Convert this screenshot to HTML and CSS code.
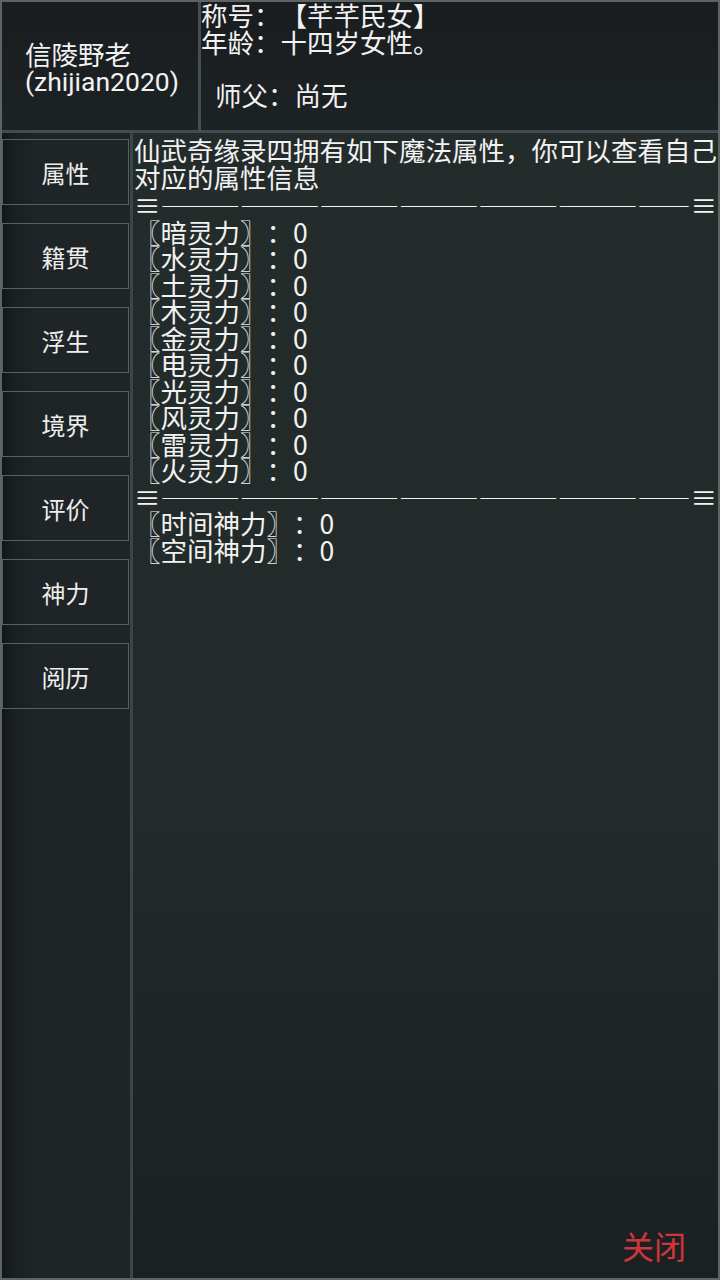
FILE: index.html
```html
<!DOCTYPE html>
<html lang="zh-CN">
<head>
    <meta charset="UTF-8">
    <meta name="viewport" content="width=device-width, initial-scale=1.0">
    <title>属性</title>
    <link rel="stylesheet" href="styles.css">
</head>
<body>
    <div class="frame">
        <div class="top">
            <div class="name">
                <p>信陵野老<br>(zhijian2020)</p>
            </div>
            <div class="profile">
                <p>称号：【芊芊民女】</p>
                <p>年龄：十四岁女性。</p>
                <p>&nbsp;</p>
                <p class="master">师父：尚无</p>
            </div>
        </div>

        <div class="main">
            <!-- tabs -->
            <div class="side">
                <button class="tab">属性</button>
                <button class="tab">籍贯</button>
                <button class="tab">浮生</button>
                <button class="tab">境界</button>
                <button class="tab">评价</button>
                <button class="tab">神力</button>
                <button class="tab">阅历</button>
            </div>

            <!-- attribute info -->
            <div class="content">
                <p>仙武奇缘录四拥有如下魔法属性，你可以查看自己对应的属性信息</p>
                <p class="sep">≡————————————————————≡</p>
                <p class="attr">〖暗灵力〗：0</p>
                <p class="attr">〖水灵力〗：0</p>
                <p class="attr">〖土灵力〗：0</p>
                <p class="attr">〖木灵力〗：0</p>
                <p class="attr">〖金灵力〗：0</p>
                <p class="attr">〖电灵力〗：0</p>
                <p class="attr">〖光灵力〗：0</p>
                <p class="attr">〖风灵力〗：0</p>
                <p class="attr">〖雷灵力〗：0</p>
                <p class="attr">〖火灵力〗：0</p>
                <p class="sep">≡————————————————————≡</p>
                <p class="attr">〖时间神力〗：0</p>
                <p class="attr">〖空间神力〗：0</p>

                <button class="close">关闭</button>
            </div>
        </div>
    </div>
</body>
</html>
```

FILE: styles.css
```css
* {
    margin: 0;
    padding: 0;
    box-sizing: border-box;
}
body {
    width: 720px;
    height: 1280px;
    background-color: #1f2527;
    color: #f2f2f2;
    font-family: Roboto, "Noto Sans CJK SC", sans-serif;
    font-size: 26.5px;
    line-height: 26.5px;
    text-spacing-trim: space-all;
    font-feature-settings: "chws" 0, "halt" 0;
    overflow: hidden;
}
.frame {
    width: 720px;
    height: 1280px;
    border: 2px solid #5d6466;
    display: flex;
    flex-direction: column;
}
.top {
    display: flex;
    height: 131px;
    border-bottom: 3px solid #454c4f;
    background: linear-gradient(#191d20, #1d2224);
}
.name {
    width: 199px;
    border-right: 3px solid #474e51;
    display: flex;
    align-items: center;
    padding: 6px 0 0 23px;
}
.profile {
    flex: 1;
    padding-top: 2px;
}
.master {
    padding-left: 14px;
}
.main {
    flex: 1;
    display: flex;
}
.side {
    width: 131px;
    border-right: 3px solid #3d4547;
    background: linear-gradient(to right, #13171a 0, #1a1f22 12px, #1f2527 34px, #1f2527 100%);
    padding-top: 6px;
    display: flex;
    flex-direction: column;
    gap: 18px;
}
.tab {
    width: 127px;
    height: 66px;
    border: 1px solid #596062;
    background: transparent;
    color: #eeeeee;
    font-family: "Noto Sans CJK SC", sans-serif;
    font-size: 24px;
    cursor: pointer;
}
.content {
    flex: 1;
    display: flex;
    flex-direction: column;
    padding: 6px 0 0 1px;
    background: linear-gradient(#242b2b, #232a2a 60%, #1b2022);
    white-space: nowrap;
    overflow: hidden;
}
.content p:first-child {
    white-space: normal;
    word-break: break-all;
    margin-right: -4px;
}
.sep, .attr {
    font-family: "Noto Sans CJK SC", sans-serif;
}
.sep {
    font-feature-settings: "fwid" 1;
}
.close {
    margin-top: auto;
    align-self: flex-end;
    margin-right: 32px;
    margin-bottom: 17px;
    background: transparent;
    border: none;
    color: #d0343d;
    font-family: "Noto Sans CJK SC", sans-serif;
    font-size: 32px;
    line-height: 32px;
    cursor: pointer;
}
```
